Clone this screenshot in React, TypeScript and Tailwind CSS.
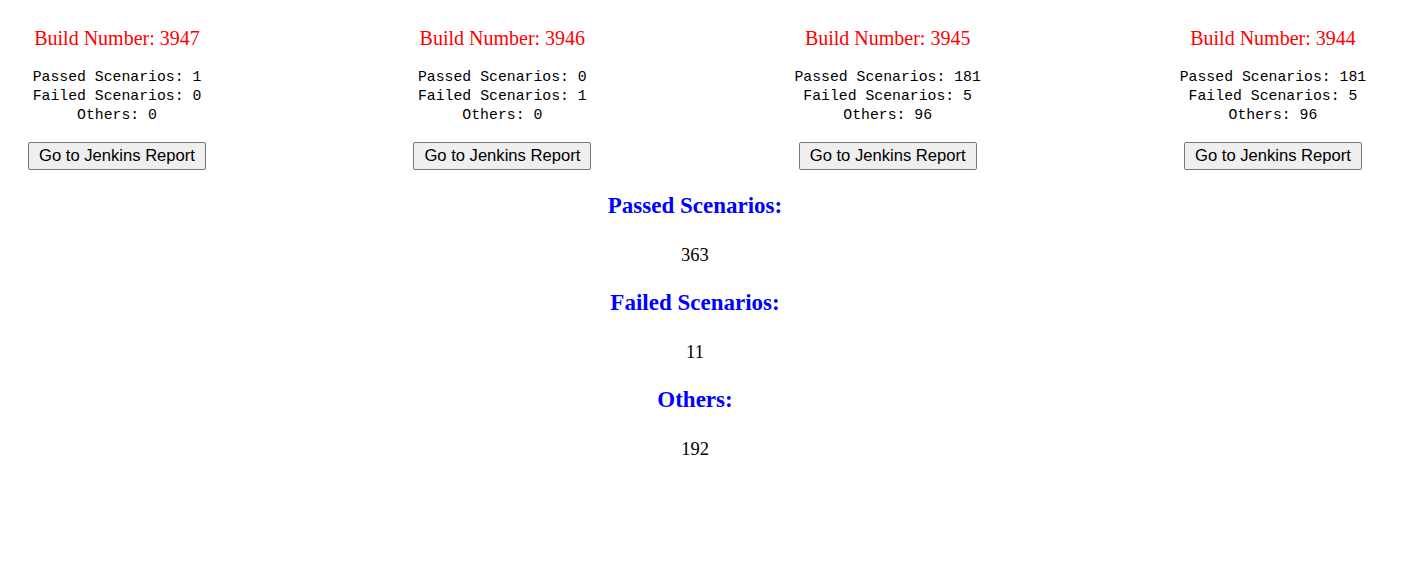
import React from 'react';

const builds = [
  { number: 3947, passed: 1, failed: 0, others: 0 },
  { number: 3946, passed: 0, failed: 1, others: 0 },
  { number: 3945, passed: 181, failed: 5, others: 96 },
  { number: 3944, passed: 181, failed: 5, others: 96 },
];

const totals = [
  { label: 'Passed Scenarios:', value: 363 },
  { label: 'Failed Scenarios:', value: 11 },
  { label: 'Others:', value: 192 },
];

export default function App() {
  return (
    <div className="w-[1390px] bg-white text-black font-['Liberation_Serif',serif]">
      {/* build cards */}
      <div className="flex justify-between pt-[27px]">
        {builds.map((b) => (
          <div key={b.number} className="w-[234px] flex flex-col items-center text-center">
            <h3 className="text-[20px] leading-[23px] text-[#ff0000]">Build Number: {b.number}</h3>
            <pre className="mt-[18px] font-['Liberation_Mono',monospace] text-[14.8px] leading-[19px] text-black">
              {`Passed Scenarios: ${b.passed}\nFailed Scenarios: ${b.failed}\nOthers: ${b.others}`}
            </pre>
            <button className="mt-[17px] h-[28px] px-[10px] bg-[#efefef] border border-[#767676] rounded-[2px] font-['Liberation_Sans',sans-serif] text-[16.6px] leading-[20px] text-black">
              Go to Jenkins Report
            </button>
          </div>
        ))}
      </div>

      {/* totals */}
      <div className="flex flex-col items-center text-center mt-[23px]">
        {totals.map((t) => (
          <div key={t.label} className="flex flex-col items-center">
            <h2 className="text-[23px] leading-[26px] font-bold text-[#0000ff]">{t.label}</h2>
            <p className="mt-[25px] mb-[24px] text-[18.5px] leading-[22px]">{t.value}</p>
          </div>
        ))}
      </div>
    </div>
  );
}
